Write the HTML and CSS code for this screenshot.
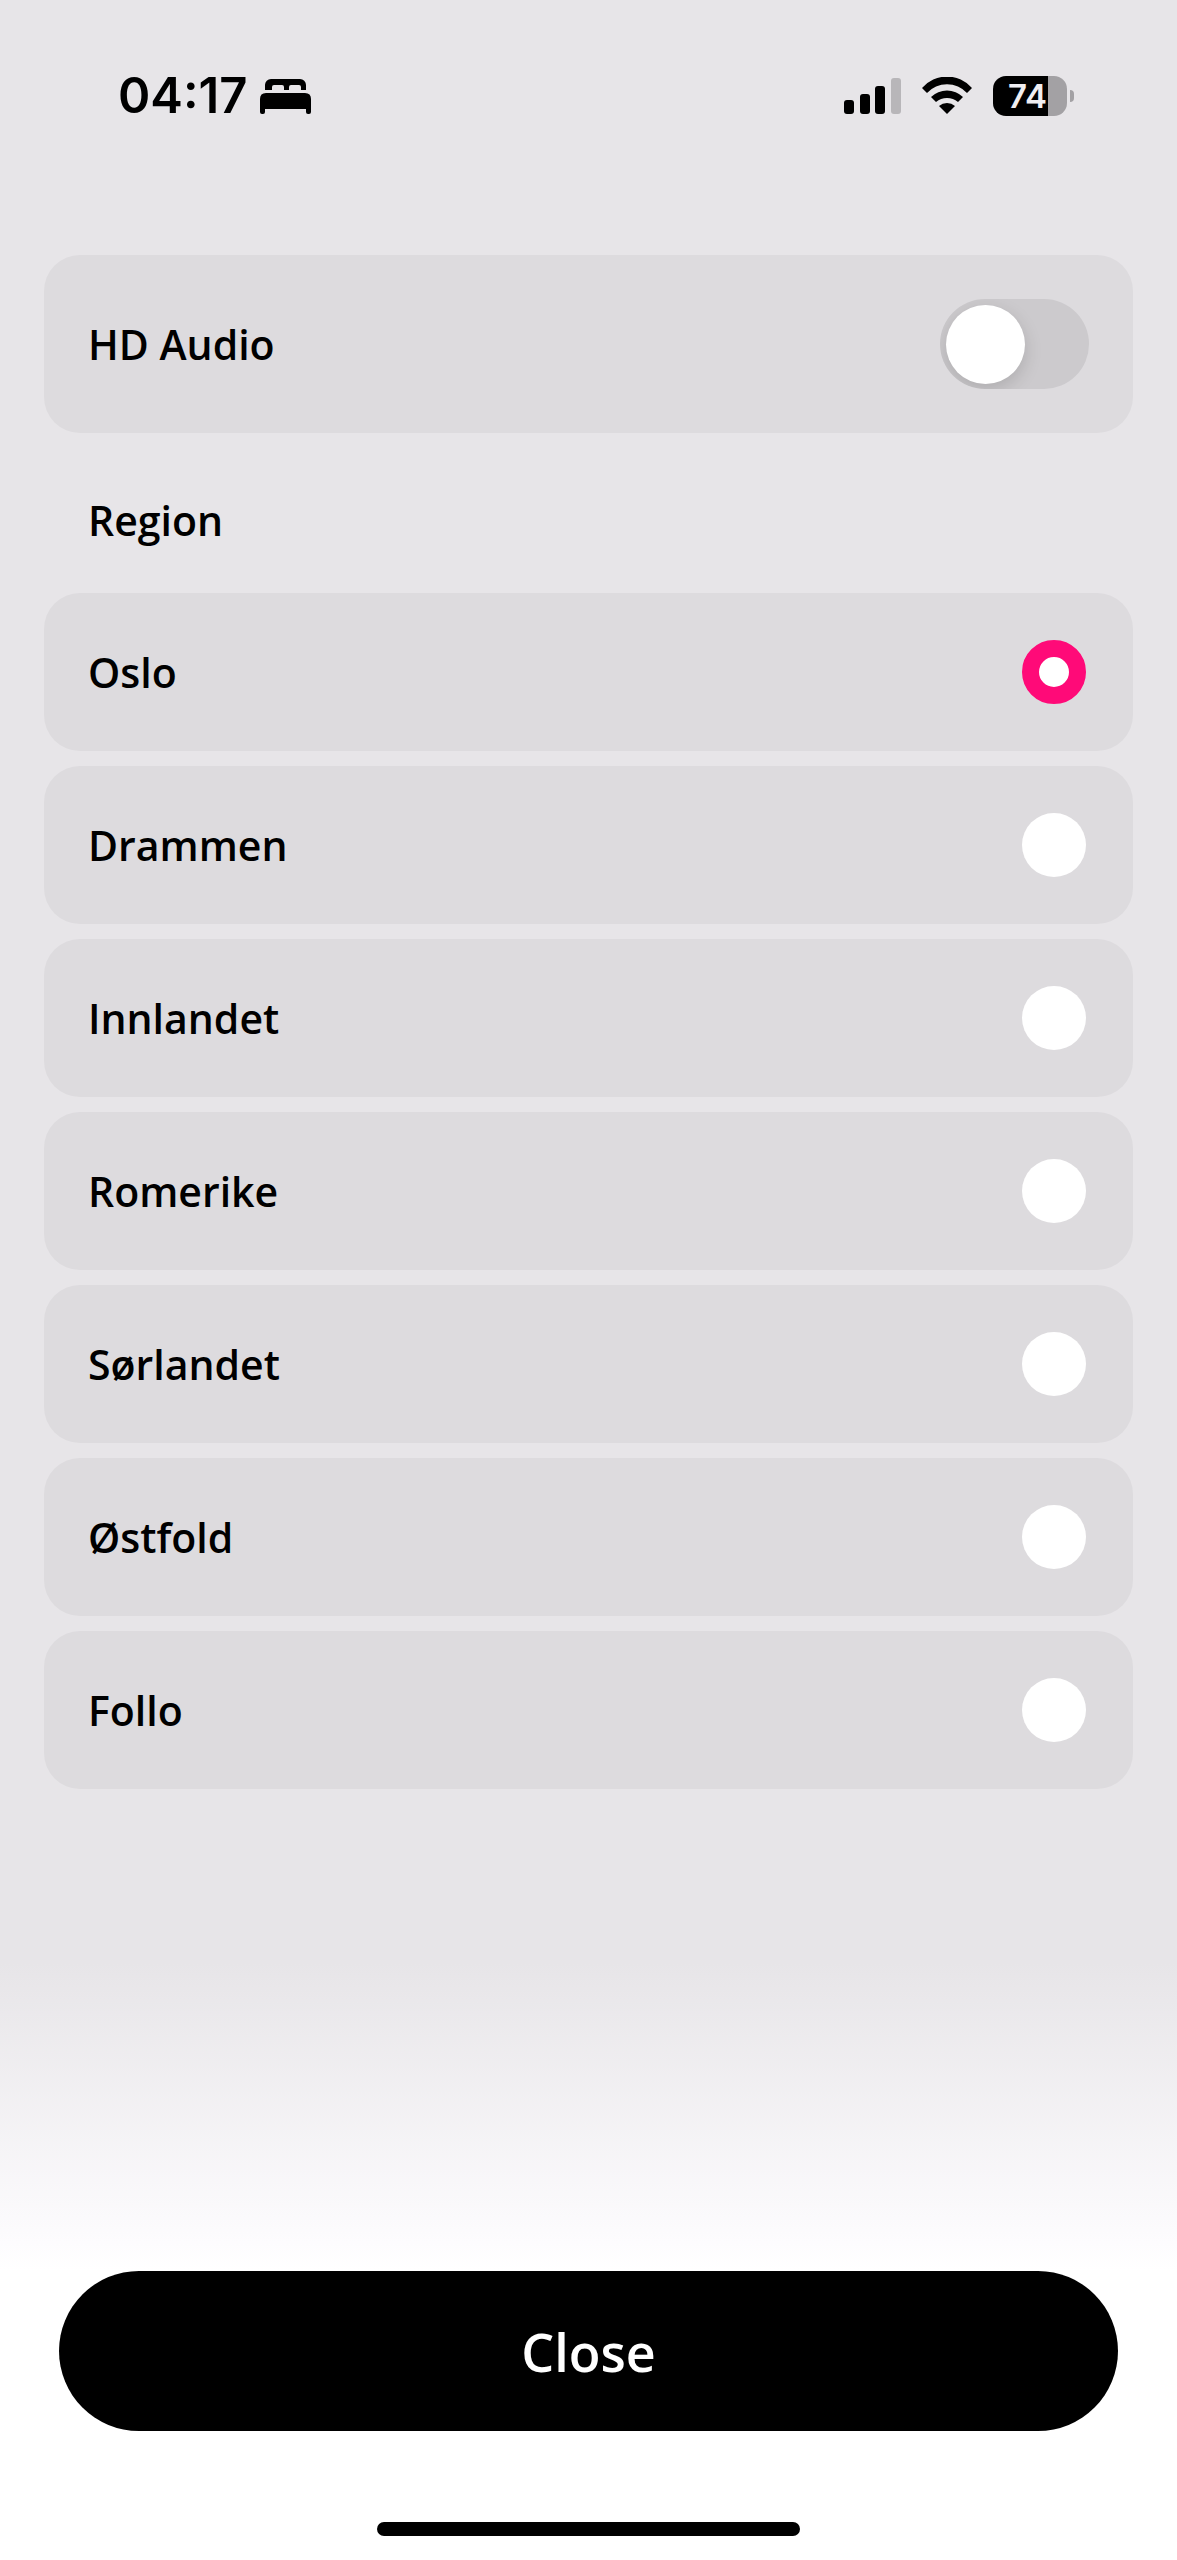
FILE: index.html
```html
<!DOCTYPE html>
<html lang="en">
<head>
  <meta charset="UTF-8">
  <meta name="viewport" content="width=device-width, initial-scale=1.0">
  <title>Settings</title>
  <link rel="stylesheet" href="styles.css">
</head>
<body>
  <!-- Status bar -->
  <header class="status-bar">
    <div class="status-left">
      <span class="time">04:17</span>
      <svg width="51" height="36" viewBox="0 0 51 36">
        <path d="M5 12V7a6 6 0 0 1 6-6h29a6 6 0 0 1 6 6v5h-5V9q0-2-2-2h-8q-2 0-2 2v3h-5V9q0-2-2-2h-8q-2 0-2 2v3z"/>
        <path d="M0 34V21q0-6 6-6h39q6 0 6 6v13q0 2-2 2h-1q-2 0-2-2v-3H5v3q0 2-2 2H2q-2 0-2-2z"/>
      </svg>
    </div>
    <div class="status-right">
      <svg width="57" height="36" viewBox="0 0 57 36">
        <rect x="0" y="22" width="10" height="14" rx="3"/>
        <rect x="16" y="16" width="10" height="20" rx="3"/>
        <rect x="31" y="8" width="10" height="28" rx="3"/>
        <rect class="dim" x="47" y="0" width="10" height="36" rx="3"/>
      </svg>
      <svg width="50" height="37" viewBox="0 0 50 37">
        <path d="M0 11A33 33 0 0 1 50 11L45 16A27 27 0 0 0 5 16Z"/>
        <path d="M9 20A23 23 0 0 1 41 20L36 25A17 17 0 0 0 14 25Z"/>
        <path d="M17 29A12 12 0 0 1 33 29L25 37Z"/>
      </svg>
      <div class="battery">
        <span class="battery-level">74</span>
      </div>
    </div>
  </header>

  <main class="settings">
    <label class="card card-toggle">
      <span>HD Audio</span>
      <input type="checkbox" class="toggle" name="hd-audio" role="switch">
    </label>

    <h2 id="region-title">Region</h2>

    <div class="regions" role="radiogroup" aria-labelledby="region-title">
      <label class="card">
        <span>Oslo</span>
        <input type="radio" class="radio" name="region" value="oslo" checked>
      </label>
      <label class="card">
        <span>Drammen</span>
        <input type="radio" class="radio" name="region" value="drammen">
      </label>
      <label class="card">
        <span>Innlandet</span>
        <input type="radio" class="radio" name="region" value="innlandet">
      </label>
      <label class="card">
        <span>Romerike</span>
        <input type="radio" class="radio" name="region" value="romerike">
      </label>
      <label class="card">
        <span>Sørlandet</span>
        <input type="radio" class="radio" name="region" value="sorlandet">
      </label>
      <label class="card">
        <span>Østfold</span>
        <input type="radio" class="radio" name="region" value="ostfold">
      </label>
      <label class="card">
        <span>Follo</span>
        <input type="radio" class="radio" name="region" value="follo">
      </label>
    </div>
  </main>

  <footer class="bottom">
    <button type="button" class="close-btn">Close</button>
    <div class="home-indicator"></div>
  </footer>
</body>
</html>
```
FILE: styles.css
```css
* {
  box-sizing: border-box;
}
body {
  margin: 0;
  min-height: 100vh;
  display: flex;
  flex-direction: column;
  background: #e7e5e8;
  color: #000;
  font-family: "Open Sans", sans-serif;
  font-size: 41px;
  font-weight: 600;
  line-height: 58px;
}

/* Status bar */
.status-bar {
  display: flex;
  align-items: center;
  justify-content: space-between;
  height: 191px;
  margin-bottom: 64px;
  padding: 0 103px 0 118px;
  font-family: Inter, sans-serif;
}
.status-left {
  display: flex;
  align-items: center;
  gap: 12px;
}
.status-right {
  display: flex;
  align-items: center;
  gap: 21px;
}
.time {
  font-size: 49px;
}
.dim {
  fill: #b8b6b9;
}
.battery {
  display: flex;
  align-items: center;
}
.battery-level {
  width: 74px;
  height: 40px;
  padding-left: 15px;
  border-radius: 13px;
  background: linear-gradient(to right, #000 74%, #a3a1a4 74%);
  color: #f0eef1;
  font-size: 33px;
  line-height: 40px;
}
.battery::after {
  content: "";
  width: 4px;
  height: 12px;
  margin-left: 3px;
  border-radius: 0 4px 4px 0;
  background: #a3a1a4;
}

/* Settings */
.settings {
  padding: 0 44px;
}
.card {
  display: flex;
  align-items: center;
  justify-content: space-between;
  height: 158px;
  padding: 0 47px 0 44px;
  border-radius: 36px;
  background: #dddbde;
  cursor: pointer;
}
.card-toggle {
  height: 178px;
  padding-right: 44px;
}
h2 {
  margin: 0;
  padding: 58px 44px 44px;
  font-size: 41px;
  font-weight: 600;
}
.regions {
  display: flex;
  flex-direction: column;
  gap: 15px;
}
.toggle {
  appearance: none;
  display: flex;
  align-items: center;
  width: 149px;
  height: 90px;
  margin: 0;
  padding: 0 6px;
  border-radius: 45px;
  background: #cccacd;
  overflow: hidden;
}
.toggle::before {
  content: "";
  width: 79px;
  height: 79px;
  border-radius: 50%;
  background: #fff;
  box-shadow: 0 6px 18px rgba(0, 0, 0, 0.15);
}
.toggle:checked {
  justify-content: flex-end;
  background: #ff0a78;
}
.radio {
  appearance: none;
  width: 64px;
  height: 64px;
  margin: 0;
  border-radius: 50%;
  background: #fff;
}
.radio:checked {
  border: 17px solid #ff0a78;
}

/* Bottom */
.bottom {
  display: flex;
  flex-direction: column;
  align-items: center;
  margin-top: auto;
  padding: 308px 59px 24px;
  background: linear-gradient(#e7e5e8, #fdfcfe 280px, #fff 308px);
}
.close-btn {
  width: 100%;
  height: 160px;
  border: none;
  border-radius: 80px;
  background: #000;
  color: #fff;
  font-family: inherit;
  font-size: 52px;
  font-weight: 600;
  cursor: pointer;
}
.home-indicator {
  width: 40%;
  height: 14px;
  margin-top: 91px;
  border-radius: 7px;
  background: #000;
}
```
